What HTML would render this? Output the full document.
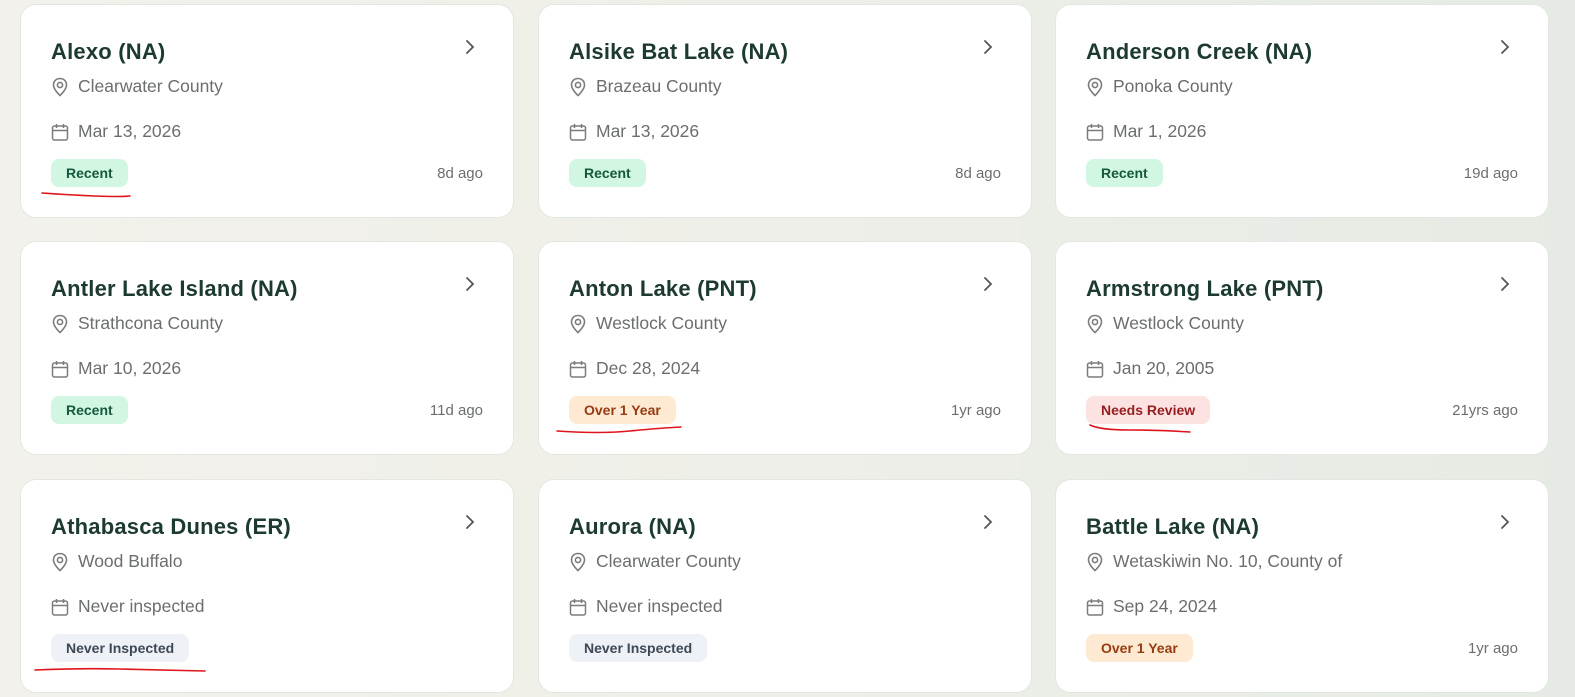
<!DOCTYPE html>
<html><head><meta charset="utf-8"><style>
*{box-sizing:border-box;margin:0;padding:0}
body{width:1575px;height:697px;overflow:hidden;background:linear-gradient(90deg,#f3f1eb 0%,#eeefe8 50%,#e5ebe4 100%);font-family:"Liberation Sans",sans-serif;position:relative}
.card{position:absolute;width:494px;height:214px;background:#fff;border:1px solid #e2e8e1;border-radius:16px}
.t{position:absolute;left:30px;top:34px;font-size:22px;font-weight:bold;color:#1c3a2e;letter-spacing:0.2px}
.chev{position:absolute;left:444px;top:34px}
.row{position:absolute;left:30px;font-size:17.5px;color:#6b6f6c;display:flex;align-items:center}
.row svg{margin-right:9px}
.loc{top:71px}.dt{top:116px}
.b{position:absolute;left:30px;top:154px;height:28px;padding:0 15px;border-radius:8px;font-size:14px;font-weight:bold;line-height:28px}
.rec{background:#d1f7e3;color:#16583c}
.ov{background:#feead2;color:#963b12}
.nr{background:#fde2e2;color:#951e1e}
.ni{background:#eef1f5;color:#3e4856}
.ago{position:absolute;right:30px;top:160px;font-size:15px;color:#6b6f6c}
</style></head><body>
<svg width="0" height="0" style="position:absolute"><defs>
<g id="pin"><path d="M9 1.5C5.2 1.5 2.5 4.3 2.5 8c0 4.6 6.5 10.5 6.5 10.5s6.5-5.9 6.5-10.5c0-3.7-2.7-6.5-6.5-6.5z" fill="none" stroke="#7a7d7a" stroke-width="1.6"/><circle cx="9" cy="8" r="2.6" fill="none" stroke="#7a7d7a" stroke-width="1.6"/></g>
<g id="cal"><rect x="1.5" y="3" width="15" height="14" rx="2" fill="none" stroke="#7a7d7a" stroke-width="1.5"/><path d="M1.5 7.5h15M5.5 1v4M12.5 1v4" stroke="#7a7d7a" stroke-width="1.5"/></g>
<g id="ch"><path d="M2 2l6 6-6 6" fill="none" stroke="#555" stroke-width="1.8" stroke-linecap="round"/></g>
</defs></svg>

<div class="card" style="left:20px;top:4px"><div class="t">Alexo (NA)</div><svg class="chev" width="12" height="18"><use href="#ch"/></svg><div class="row loc"><svg width="18" height="20"><use href="#pin"/></svg>Clearwater County</div><div class="row dt"><svg width="18" height="18"><use href="#cal"/></svg>Mar 13, 2026</div><div class="b rec">Recent</div><div class="ago">8d ago</div></div>
<div class="card" style="left:538px;top:4px"><div class="t">Alsike Bat Lake (NA)</div><svg class="chev" width="12" height="18"><use href="#ch"/></svg><div class="row loc"><svg width="18" height="20"><use href="#pin"/></svg>Brazeau County</div><div class="row dt"><svg width="18" height="18"><use href="#cal"/></svg>Mar 13, 2026</div><div class="b rec">Recent</div><div class="ago">8d ago</div></div>
<div class="card" style="left:1055px;top:4px"><div class="t">Anderson Creek (NA)</div><svg class="chev" width="12" height="18"><use href="#ch"/></svg><div class="row loc"><svg width="18" height="20"><use href="#pin"/></svg>Ponoka County</div><div class="row dt"><svg width="18" height="18"><use href="#cal"/></svg>Mar 1, 2026</div><div class="b rec">Recent</div><div class="ago">19d ago</div></div>

<div class="card" style="left:20px;top:241px"><div class="t">Antler Lake Island (NA)</div><svg class="chev" width="12" height="18"><use href="#ch"/></svg><div class="row loc"><svg width="18" height="20"><use href="#pin"/></svg>Strathcona County</div><div class="row dt"><svg width="18" height="18"><use href="#cal"/></svg>Mar 10, 2026</div><div class="b rec">Recent</div><div class="ago">11d ago</div></div>
<div class="card" style="left:538px;top:241px"><div class="t">Anton Lake (PNT)</div><svg class="chev" width="12" height="18"><use href="#ch"/></svg><div class="row loc"><svg width="18" height="20"><use href="#pin"/></svg>Westlock County</div><div class="row dt"><svg width="18" height="18"><use href="#cal"/></svg>Dec 28, 2024</div><div class="b ov">Over 1 Year</div><div class="ago">1yr ago</div></div>
<div class="card" style="left:1055px;top:241px"><div class="t">Armstrong Lake (PNT)</div><svg class="chev" width="12" height="18"><use href="#ch"/></svg><div class="row loc"><svg width="18" height="20"><use href="#pin"/></svg>Westlock County</div><div class="row dt"><svg width="18" height="18"><use href="#cal"/></svg>Jan 20, 2005</div><div class="b nr">Needs Review</div><div class="ago">21yrs ago</div></div>

<div class="card" style="left:20px;top:479px"><div class="t">Athabasca Dunes (ER)</div><svg class="chev" width="12" height="18"><use href="#ch"/></svg><div class="row loc"><svg width="18" height="20"><use href="#pin"/></svg>Wood Buffalo</div><div class="row dt"><svg width="18" height="18"><use href="#cal"/></svg>Never inspected</div><div class="b ni">Never Inspected</div></div>
<div class="card" style="left:538px;top:479px"><div class="t">Aurora (NA)</div><svg class="chev" width="12" height="18"><use href="#ch"/></svg><div class="row loc"><svg width="18" height="20"><use href="#pin"/></svg>Clearwater County</div><div class="row dt"><svg width="18" height="18"><use href="#cal"/></svg>Never inspected</div><div class="b ni">Never Inspected</div></div>
<div class="card" style="left:1055px;top:479px"><div class="t">Battle Lake (NA)</div><svg class="chev" width="12" height="18"><use href="#ch"/></svg><div class="row loc"><svg width="18" height="20"><use href="#pin"/></svg>Wetaskiwin No. 10, County of</div><div class="row dt"><svg width="18" height="18"><use href="#cal"/></svg>Sep 24, 2024</div><div class="b ov">Over 1 Year</div><div class="ago">1yr ago</div></div>

<svg style="position:absolute;left:0;top:0" width="1575" height="697">
<g fill="none" stroke="#e0141c" stroke-width="1.6" stroke-linecap="round">
<path d="M42 193 Q70 195 95 196 T130 196"/>
<path d="M557 431 Q600 434 630 431 T681 427"/>
<path d="M1090 425 Q1100 430 1130 430 T1190 432"/>
<path d="M35 670 Q80 668 120 669 T205 671"/>
</g></svg>
</body></html>
